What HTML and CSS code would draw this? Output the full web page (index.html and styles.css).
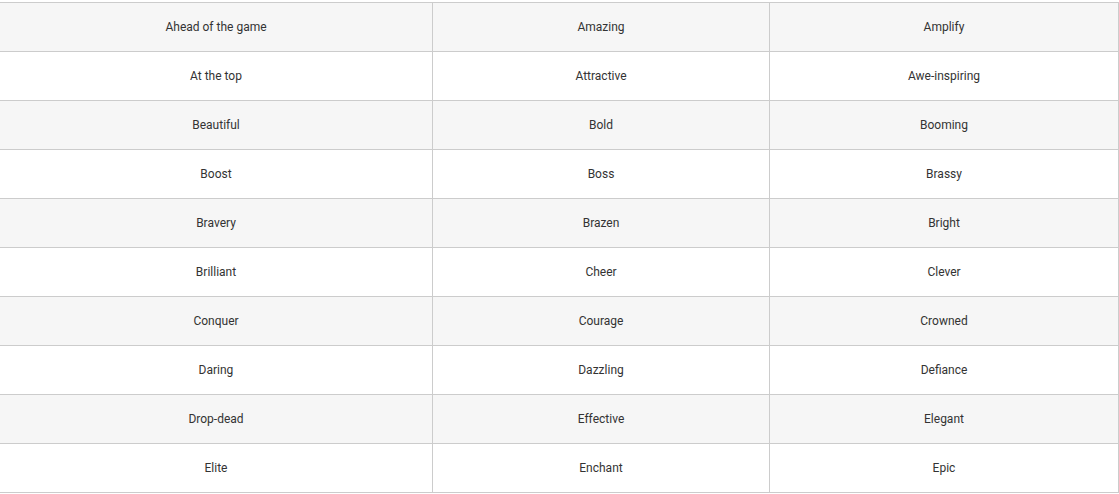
FILE: index.html
```html
<!DOCTYPE html>
<html>
<head>
<meta charset="utf-8">
<link rel="stylesheet" href="styles.css">
</head>
<body>
<table class="words">
<colgroup><col class="c1"><col class="c2"><col class="c3"></colgroup>
<tbody>
<tr><td>Ahead of the game</td><td>Amazing</td><td>Amplify</td></tr>
<tr><td>At the top</td><td>Attractive</td><td>Awe-inspiring</td></tr>
<tr><td>Beautiful</td><td>Bold</td><td>Booming</td></tr>
<tr><td>Boost</td><td>Boss</td><td>Brassy</td></tr>
<tr><td>Bravery</td><td>Brazen</td><td>Bright</td></tr>
<tr><td>Brilliant</td><td>Cheer</td><td>Clever</td></tr>
<tr><td>Conquer</td><td>Courage</td><td>Crowned</td></tr>
<tr><td>Daring</td><td>Dazzling</td><td>Defiance</td></tr>
<tr><td>Drop-dead</td><td>Effective</td><td>Elegant</td></tr>
<tr><td>Elite</td><td>Enchant</td><td>Epic</td></tr>
</tbody>
</table>
</body>
</html>
```
FILE: styles.css
```css
html, body {
  margin: 0;
  padding: 0;
  background: #fff;
}
body {
  padding-top: 2px;
  overflow: hidden;
  font-family: Roboto, "Liberation Sans", sans-serif;
  font-size: 12px;
  color: #333;
}
.words {
  border-collapse: collapse;
  table-layout: fixed;
  width: 1119px;
  margin-left: -1px;
}
.c1 { width: 433px; }
.c2 { width: 337px; }
.c3 { width: 349px; }
.words td {
  border: 1px solid #ccc;
  height: 49px;
  padding: 0 8px;
  text-align: center;
  vertical-align: middle;
  box-sizing: border-box;
}
.words tr:nth-child(odd) td {
  background: #f6f6f6;
}
```
